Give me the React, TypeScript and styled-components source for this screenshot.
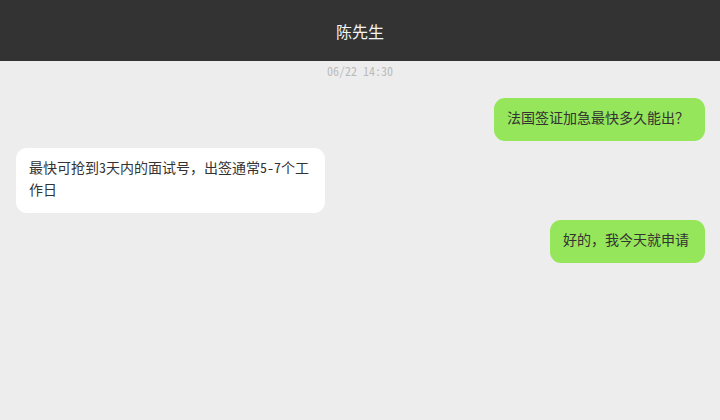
import React from "react";
import styled, { createGlobalStyle } from "styled-components";

const GlobalStyle = createGlobalStyle`
    html, body {
        margin: 0;
        padding: 0;
        background: #ededed;
    }
    body {
        font-family: "Noto Sans Mono CJK SC", "Noto Sans CJK SC", monospace;
    }
`;

const Screen = styled.div`
    width: 720px;
    height: 420px;
    display: flex;
    flex-direction: column;
    background: #ededed;
    overflow: hidden;
`;

const Header = styled.header`
    height: 61px;
    flex-shrink: 0;
    display: flex;
    align-items: center;
    justify-content: center;
    background: #333333;
    color: #f4f4f4;
    font-size: 16px;
    padding-top: 1px;
    box-sizing: border-box;
`;

const Thread = styled.div`
    display: flex;
    flex-direction: column;
    gap: 7px;
    padding: 0 15px 0 16px;
`;

const TimeStamp = styled.div`
    text-align: center;
    color: #bbbbbb;
    font-size: 12px;
    line-height: 16px;
    padding: 2px 0 19px;
`;

const Row = styled.div<{ $mine?: boolean }>`
    display: flex;
    justify-content: ${(p) => (p.$mine ? "flex-end" : "flex-start")};
`;

const Bubble = styled.div<{ $mine?: boolean }>`
    max-width: 309px;
    box-sizing: border-box;
    padding: 8px 16px 13px 13px;
    border-radius: 11px;
    font-size: 14px;
    line-height: 22px;
    color: #333333;
    background: ${(p) => (p.$mine ? "#95e65a" : "#ffffff")};
    word-break: break-all;
`;

type Message = { text: string; mine?: boolean };

const messages: Message[] = [
    { text: "法国签证加急最快多久能出？", mine: true },
    { text: "最快可抢到3天内的面试号，出签通常5-7个工作日" },
    { text: "好的，我今天就申请", mine: true },
];

const App: React.FC = () => (
    <>
        <GlobalStyle />
        <Screen>
            <Header>陈先生</Header>
            <TimeStamp>06/22 14:30</TimeStamp>
            <Thread>
                {messages.map((m, i) => (
                    <Row key={i} $mine={m.mine}>
                        <Bubble $mine={m.mine}>{m.text}</Bubble>
                    </Row>
                ))}
            </Thread>
        </Screen>
    </>
);

export default App;
